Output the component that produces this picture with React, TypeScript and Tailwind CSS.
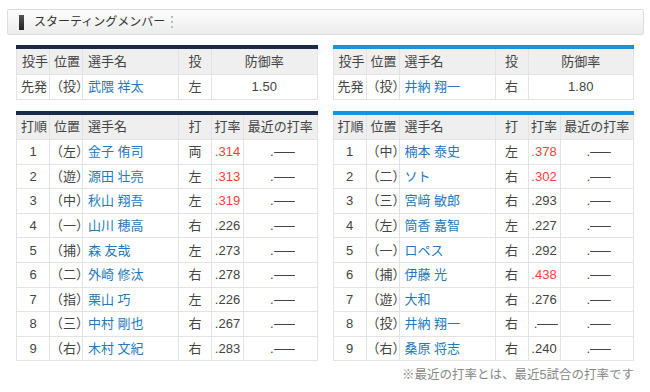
import React from "react";

const font = { fontFamily: '"Liberation Sans", "Noto Sans CJK JP", sans-serif' };

type Row = [string, string, string, string, string, boolean];

const home: Row[] = [
  ["1", "（左）", "金子 侑司", "両", ".314", true],
  ["2", "（遊）", "源田 壮亮", "左", ".313", true],
  ["3", "（中）", "秋山 翔吾", "左", ".319", true],
  ["4", "（一）", "山川 穂高", "右", ".226", false],
  ["5", "（捕）", "森 友哉", "左", ".273", false],
  ["6", "（二）", "外崎 修汰", "右", ".278", false],
  ["7", "（指）", "栗山 巧", "左", ".226", false],
  ["8", "（三）", "中村 剛也", "右", ".267", false],
  ["9", "（右）", "木村 文紀", "右", ".283", false],
];

const away: Row[] = [
  ["1", "（中）", "楠本 泰史", "左", ".378", true],
  ["2", "（二）", "ソト", "右", ".302", true],
  ["3", "（三）", "宮﨑 敏郎", "右", ".293", false],
  ["4", "（左）", "筒香 嘉智", "左", ".227", false],
  ["5", "（一）", "ロペス", "右", ".292", false],
  ["6", "（捕）", "伊藤 光", "右", ".438", true],
  ["7", "（遊）", "大和", "右", ".276", false],
  ["8", "（投）", "井納 翔一", "右", "-", false],
  ["9", "（右）", "桑原 将志", "右", ".240", false],
];

function Dash() {
  return (
    <span className="inline-flex items-center">
      <span>.</span>
      <span className="ml-[4px] inline-block scale-x-[1.6]">―</span>
    </span>
  );
}

const td = "border border-[#e3e3e3] h-[25px] p-0 text-[13px] leading-none";
const tdl = "border border-[#e3e3e3] h-[24.6px] p-0 text-[13px] leading-none";
const th = "border border-[#e3e3e3] h-[25px] p-0 text-[13px] font-normal leading-none bg-[#efefef]";

function PitcherTable({ bar, name, hand, era }: { bar: string; name: string; hand: string; era: string }) {
  return (
    <div>
      <div className={`h-[4px] ${bar}`} />
      <table className="w-full table-fixed border-collapse text-[#444]">
        <colgroup>
          <col className="w-[33px]" />
          <col className="w-[33px]" />
          <col className="w-[96px]" />
          <col className="w-[33px]" />
          <col />
        </colgroup>
        <thead>
          <tr>
            <th className={`${th} text-left pl-[5px] border-t-0`}>投手</th>
            <th className={`${th} text-left pl-[4px] border-t-0`}>位置</th>
            <th className={`${th} text-left pl-[5px] border-t-0`}>選手名</th>
            <th className={`${th} text-center border-t-0`}>投</th>
            <th className={`${th} text-center border-t-0`}>防御率</th>
          </tr>
        </thead>
        <tbody>
          <tr>
            <td className={`${td} pl-[4px]`}>先発</td>
            <td className={`${td} pl-[0px]`}>（投）</td>
            <td className={`${td} pl-[5px] text-[#2479bd]`}>{name}</td>
            <td className={`${td} text-center`}>{hand}</td>
            <td className={`${td} text-center`}>{era}</td>
          </tr>
        </tbody>
      </table>
    </div>
  );
}

function LineupTable({ bar, rows }: { bar: string; rows: Row[] }) {
  return (
    <div>
      <div className={`h-[4px] ${bar}`} />
      <table className="w-full table-fixed border-collapse text-[#444]">
        <colgroup>
          <col className="w-[33px]" />
          <col className="w-[33px]" />
          <col className="w-[96px]" />
          <col className="w-[33px]" />
          <col className="w-[32px]" />
          <col />
        </colgroup>
        <thead>
          <tr>
            <th className={`${th} text-left pl-[4px] border-t-0`}>打順</th>
            <th className={`${th} text-left pl-[4px] border-t-0`}>位置</th>
            <th className={`${th} text-left pl-[5px] border-t-0`}>選手名</th>
            <th className={`${th} text-center border-t-0`}>打</th>
            <th className={`${th} text-center border-t-0`}>打率</th>
            <th className={`${th} text-center border-t-0`}>最近の打率</th>
          </tr>
        </thead>
        <tbody>
          {rows.map((r) => (
            <tr key={r[0]}>
              <td className={`${tdl} text-center`}>{r[0]}</td>
              <td className={`${tdl} pl-[0px]`}>{r[1]}</td>
              <td className={`${tdl} pl-[5px] text-[#2479bd]`}>{r[2]}</td>
              <td className={`${tdl} text-center`}>{r[3]}</td>
              <td className={`${tdl} text-center ${r[5] ? "text-[#ff3b3b]" : ""}`}>
                {r[4] === "-" ? <Dash /> : r[4]}
              </td>
              <td className={`${tdl} text-center`}>
                <Dash />
              </td>
            </tr>
          ))}
        </tbody>
      </table>
    </div>
  );
}

export default function App() {
  return (
    <div className="w-[650px] h-[392px] bg-white overflow-hidden" style={font}>
      <div className="ml-[7px] mr-[6px] mt-[9px] h-[26px] rounded-[2px] border border-[#dcdcdc] bg-gradient-to-b from-[#fdfdfd] to-[#ececec] flex items-center">
        <div className="ml-[11px] w-[5px] h-[15px] bg-gradient-to-b from-[#555] to-[#222]" />
        <span className="ml-[10px] text-[12px] text-[#333] leading-none">スターティングメンバー</span>
        <div className="ml-[6px] flex flex-col gap-[3px]">
          <span className="block w-[2px] h-[2px] bg-[#bbb]" />
          <span className="block w-[2px] h-[2px] bg-[#bbb]" />
          <span className="block w-[2px] h-[2px] bg-[#bbb]" />
        </div>
      </div>
      <div className="mt-[10px] px-[16px] grid grid-cols-2 gap-x-[15px]">
        <PitcherTable bar="bg-[#1c2b4b]" name="武隈 祥太" hand="左" era="1.50" />
        <PitcherTable bar="bg-[#1593dc]" name="井納 翔一" hand="右" era="1.80" />
        <div className="mt-[11px]">
          <LineupTable bar="bg-[#1c2b4b]" rows={home} />
        </div>
        <div className="mt-[11px]">
          <LineupTable bar="bg-[#1593dc]" rows={away} />
        </div>
      </div>
      <div className="mt-[6px] pr-[16px] text-right text-[12.5px] leading-[16px] text-[#888]">
        ※最近の打率とは、最近5試合の打率です
      </div>
    </div>
  );
}
